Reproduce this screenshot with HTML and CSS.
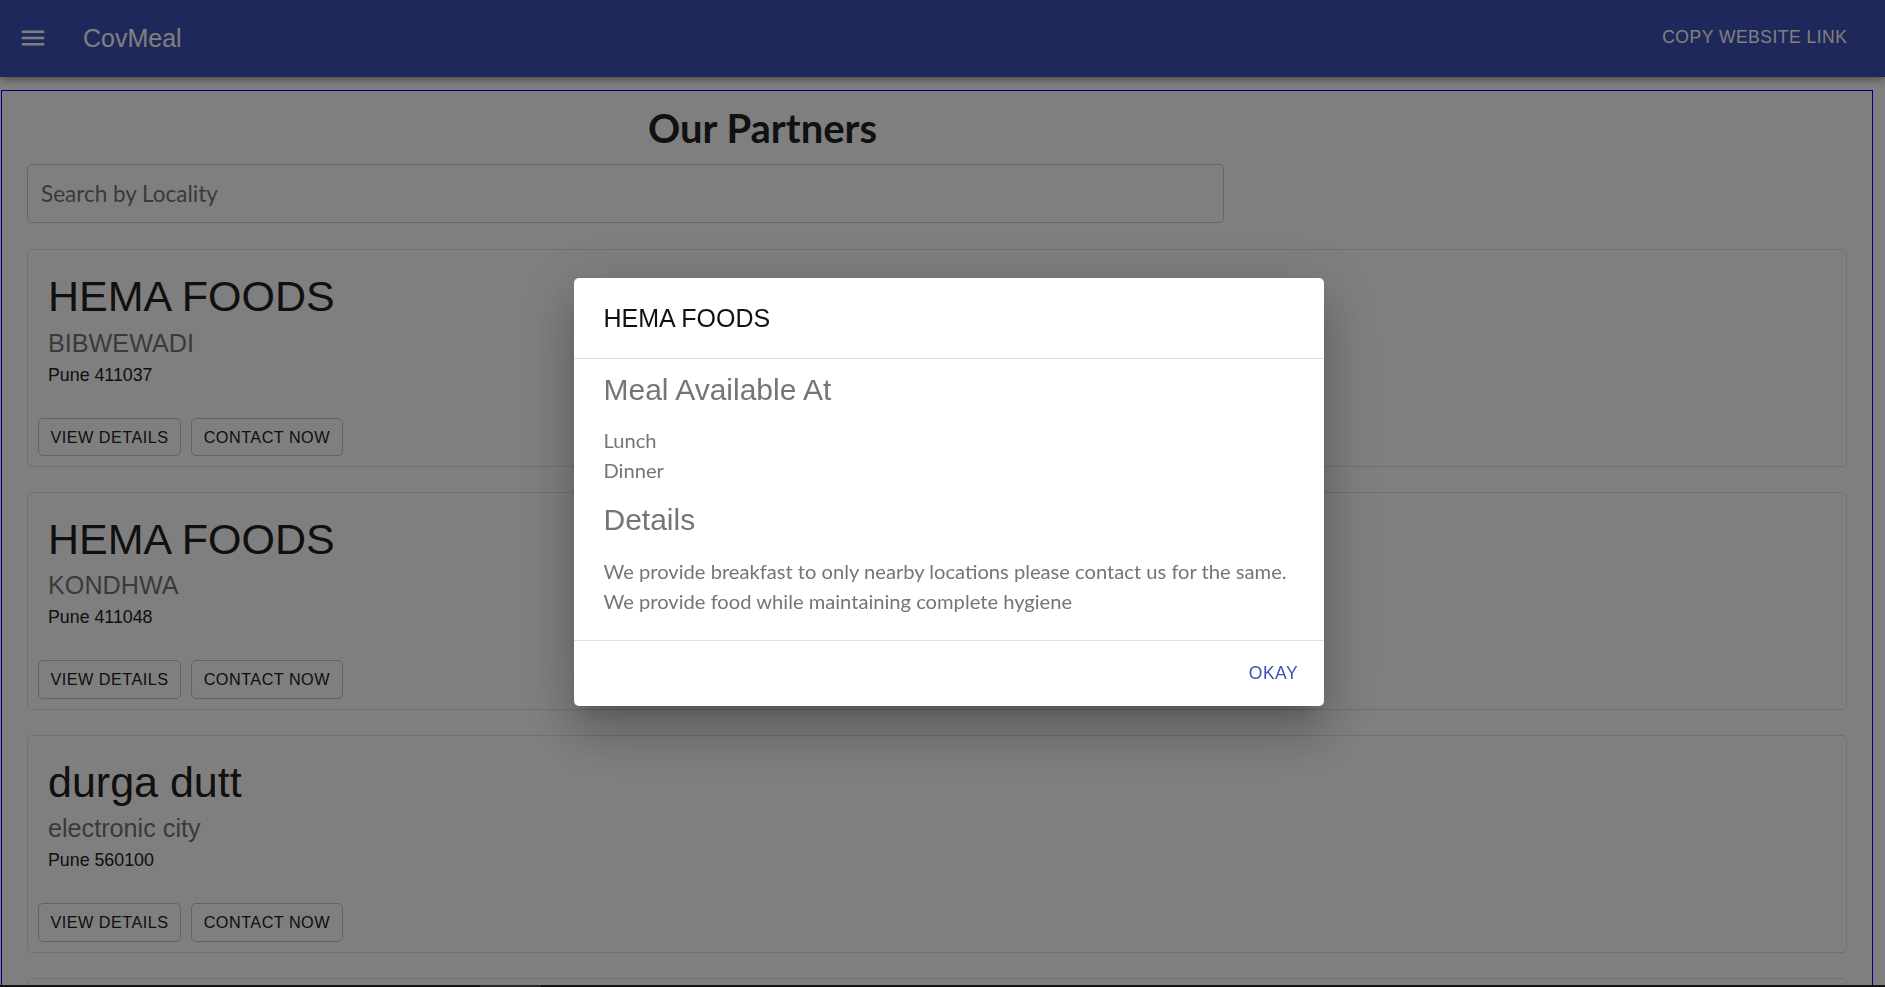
FILE: index.html
```html
<!DOCTYPE html>
<html lang="en">
<head>
<meta charset="utf-8">
<title>CovMeal</title>
<link rel="stylesheet" href="styles.css">
</head>
<body>
<header class="appbar">
  <button class="menu-btn" aria-label="menu">
    <svg class="menu-icon" viewBox="0 0 24 24" aria-hidden="true"><path d="M3 18h18v-2H3v2zm0-5h18v-2H3v2zm0-7v2h18V6H3z"/></svg>
  </button>
  <div class="brand">CovMeal</div>
  <button class="copy-btn">Copy Website Link</button>
</header>

<main class="partners">
  <h1 class="partners-title">Our Partners</h1>
  <input class="search" type="text" placeholder="Search by Locality">

  <section class="card">
    <div class="card-content">
      <h2 class="card-title">HEMA FOODS</h2>
      <h3 class="card-locality">BIBWEWADI</h3>
      <p class="card-address">Pune 411037</p>
    </div>
    <div class="card-actions">
      <button class="btn-outlined">View Details</button>
      <button class="btn-outlined">Contact Now</button>
    </div>
  </section>

  <section class="card">
    <div class="card-content">
      <h2 class="card-title">HEMA FOODS</h2>
      <h3 class="card-locality">KONDHWA</h3>
      <p class="card-address">Pune 411048</p>
    </div>
    <div class="card-actions">
      <button class="btn-outlined">View Details</button>
      <button class="btn-outlined">Contact Now</button>
    </div>
  </section>

  <section class="card">
    <div class="card-content">
      <h2 class="card-title">durga dutt</h2>
      <h3 class="card-locality">electronic city</h3>
      <p class="card-address">Pune 560100</p>
    </div>
    <div class="card-actions">
      <button class="btn-outlined">View Details</button>
      <button class="btn-outlined">Contact Now</button>
    </div>
  </section>

  <section class="card card-last"></section>
</main>

<div class="backdrop"></div>

<div class="dialog" role="dialog">
  <h2 class="dialog-title">HEMA FOODS</h2>
  <div class="dialog-content">
    <h3 class="dialog-heading">Meal Available At</h3>
    <div class="dialog-text">
      <span class="line">Lunch</span>
      <span class="line">Dinner</span>
    </div>
    <h3 class="dialog-heading">Details</h3>
    <div class="dialog-text">
      <span class="line">We provide breakfast to only nearby locations please contact us for the same.</span>
      <span class="line">We provide food while maintaining complete hygiene</span>
    </div>
  </div>
  <div class="dialog-actions">
    <button class="btn-text">Okay</button>
  </div>
</div>

<div class="bottom-strip"><span class="strip-thumb"></span></div>
</body>
</html>
```
FILE: styles.css
```css
html, body {
  margin: 0;
  padding: 0;
  height: 100%;
  overflow: hidden;
}

body {
  background: #ffffff;
  font-family: Lato, "Noto Sans", sans-serif;
  color: #212121;
}

button {
  font-family: inherit;
  cursor: pointer;
}

/* ---------- App bar ---------- */
.appbar {
  position: relative;
  z-index: 1;
  box-sizing: border-box;
  height: 77px;
  padding: 0 28px 2px 18px;
  display: flex;
  align-items: center;
  background: #3f51b5;
  color: #ffffff;
  box-shadow: 0 2.5px 5px -1.25px rgba(0, 0, 0, 0.2),
              0 5px 6.25px 0 rgba(0, 0, 0, 0.14),
              0 1.25px 12.5px 0 rgba(0, 0, 0, 0.12);
}

.menu-btn {
  display: flex;
  padding: 0;
  border: none;
  background: none;
}

.menu-icon {
  width: 30px;
  height: 30px;
  fill: #ffffff;
}

.brand {
  margin-left: 35px;
  font-family: "Liberation Sans", Arial, sans-serif;
  font-size: 25px;
  line-height: 1.6;
  font-weight: 400;
}

.copy-btn {
  margin-left: auto;
  padding: 0 9.6px;
  border: none;
  background: none;
  color: #ffffff;
  font-family: "Liberation Sans", Arial, sans-serif;
  font-size: 17.5px;
  letter-spacing: 0.5px;
  text-transform: uppercase;
  line-height: 1.75;
}

/* ---------- Partners list ---------- */
.partners {
  margin: 13px 12px 0 1px;
  padding: 0 25px;
  border: 1px solid #0000ff;
  min-height: 1200px;
}

.partners-title {
  margin: 13px 349px 12px 0;
  font-family: Lato, "Noto Sans", sans-serif;
  font-size: 40px;
  font-weight: 700;
  line-height: 1.2;
  text-align: center;
  color: #222222;
}

.search {
  display: block;
  box-sizing: border-box;
  width: 1197px;
  height: 59px;
  margin: 0 0 26px;
  padding: 0 13px;
  border: 1px solid #cccccc;
  border-radius: 5px;
  font-family: Lato, "Noto Sans", sans-serif;
  font-size: 22.5px;
  color: #212121;
  background: #ffffff;
}

.search::placeholder {
  color: #757575;
}

.card {
  margin-bottom: 25px;
  border: 1px solid #e0e0e0;
  border-radius: 5px;
  background: #ffffff;
}

.card-last {
  height: 216px;
}

.card-content {
  padding: 20px;
}

.card-title {
  margin: 0;
  font-family: "Liberation Sans", Arial, sans-serif;
  font-size: 43px;
  line-height: 52.5px;
  font-weight: 400;
  color: #212121;
}

.card-locality {
  margin: 0;
  font-family: "Liberation Sans", Arial, sans-serif;
  font-size: 25.2px;
  line-height: 40px;
  font-weight: 400;
  color: #757575;
}

.card-address {
  margin: 0;
  font-family: "Liberation Sans", Arial, sans-serif;
  font-size: 17.8px;
  line-height: 25px;
  color: #212121;
}

.card-actions {
  display: flex;
  gap: 10px;
  padding: 10px;
}

.btn-outlined {
  padding: 4px 11.5px;
  border: 1px solid #c4c4c4;
  border-radius: 5px;
  background: transparent;
  color: #212121;
  font-family: "Liberation Sans", Arial, sans-serif;
  font-size: 16.25px;
  line-height: 1.75;
  letter-spacing: 0.464px;
  text-transform: uppercase;
}

/* ---------- Modal ---------- */
.backdrop {
  position: fixed;
  inset: 0;
  z-index: 10;
  background: rgba(0, 0, 0, 0.5);
}

.dialog {
  position: fixed;
  z-index: 11;
  left: 573.5px;
  top: 278px;
  width: 750px;
  background: #ffffff;
  border-radius: 5px;
  box-shadow: 0 13.75px 18.75px -8.75px rgba(0, 0, 0, 0.2),
              0 30px 47.5px 3.75px rgba(0, 0, 0, 0.14),
              0 11.25px 57.5px 10px rgba(0, 0, 0, 0.12);
}

.dialog-title {
  margin: 0;
  padding: 20px 30px;
  font-family: "Liberation Sans", Arial, sans-serif;
  font-size: 25px;
  line-height: 40px;
  font-weight: 400;
  color: #111111;
}

.dialog-content {
  padding: 10.5px 30px 9px;
  border-top: 1px solid #e0e0e0;
  border-bottom: 1px solid #e0e0e0;
}

.dialog-heading {
  margin: 0 0 15.5px;
  font-family: "Liberation Sans", Arial, sans-serif;
  font-size: 30px;
  line-height: 40px;
  font-weight: 400;
  color: #757575;
}

.dialog-text {
  margin: 0 0 15px;
  font-family: Lato, "Noto Sans", sans-serif;
  font-size: 20.15px;
  line-height: 30px;
  color: #757575;
}

.dialog-text .line {
  display: block;
  white-space: nowrap;
}

.dialog-actions {
  display: flex;
  justify-content: flex-end;
  padding: 10px;
}

.btn-text {
  min-width: 80px;
  padding: 7.5px 10px;
  border: none;
  border-radius: 5px;
  background: none;
  color: #3f51b5;
  font-family: "Liberation Sans", Arial, sans-serif;
  font-size: 17.5px;
  line-height: 1.75;
  letter-spacing: 0.5px;
  text-transform: uppercase;
}

/* ---------- bottom edge strip ---------- */
.bottom-strip {
  position: fixed;
  z-index: 12;
  left: 0;
  right: 0;
  bottom: 0;
  height: 2px;
  display: flex;
  background: #141414;
}

.strip-thumb {
  width: 61px;
  margin-left: 480px;
  background: #2a2a2a;
}
```
